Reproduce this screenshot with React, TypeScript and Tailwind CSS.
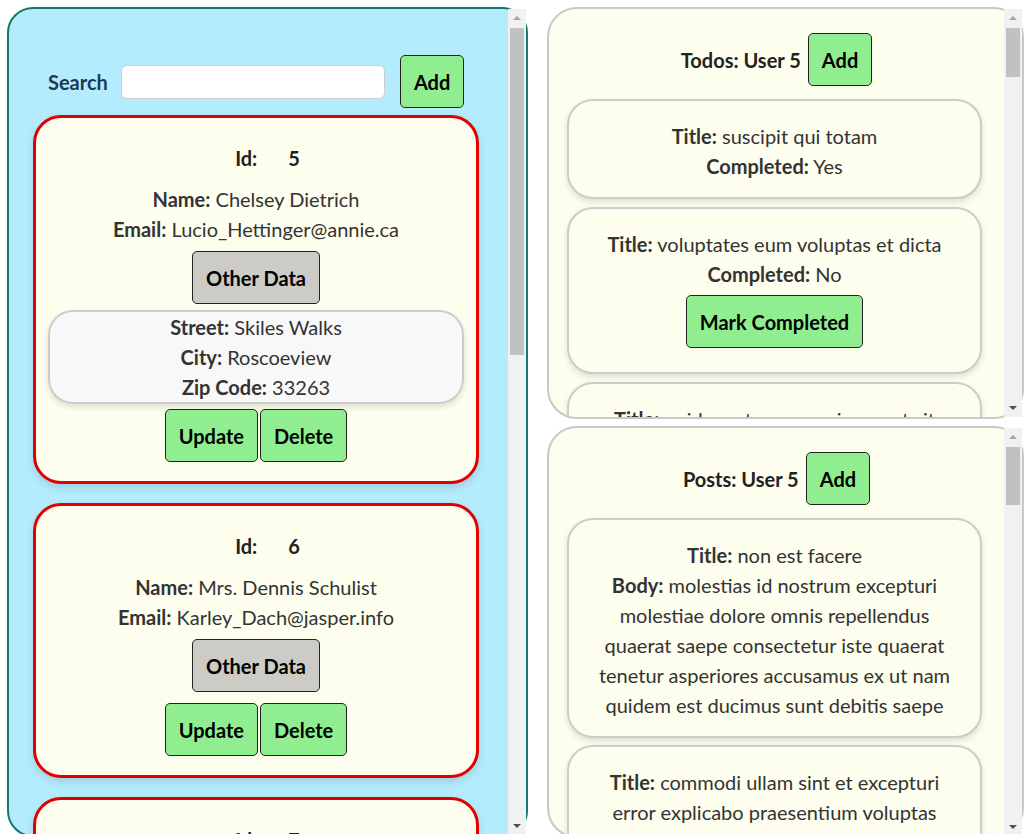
import type { ReactNode } from 'react';

type Address = { street: string; city: string; zipcode: string };
type User = { id: number; name: string; email: string; address?: Address; showAddress: boolean };

const USERS: User[] = [
  {
    id: 5,
    name: 'Chelsey Dietrich',
    email: 'Lucio_Hettinger@annie.ca',
    address: { street: 'Skiles Walks', city: 'Roscoeview', zipcode: '33263' },
    showAddress: true,
  },
  { id: 6, name: 'Mrs. Dennis Schulist', email: 'Karley_Dach@jasper.info', showAddress: false },
  { id: 7, name: 'Kurtis Weissnat', email: 'Telly.Hoeger@billy.biz', showAddress: false },
];

const TODOS = [
  { title: 'suscipit qui totam', completed: true },
  { title: 'voluptates eum voluptas et dicta', completed: false },
  { title: 'quidem at rerum quis ex aut sit', completed: false },
];

const POSTS = [
  {
    title: 'non est facere',
    body: 'molestias id nostrum excepturi molestiae dolore omnis repellendus quaerat saepe consectetur iste quaerat tenetur asperiores accusamus ex ut nam quidem est ducimus sunt debitis saepe',
  },
  {
    title: 'commodi ullam sint et excepturi error explicabo praesentium voluptas',
    body: 'odio fugit voluptatum ducimus earum autem est incidunt voluptatem odit reiciendis aliquam sunt sequi nulla dolorem',
  },
];

const FONT = "font-['Lato','Segoe_UI','Noto_Sans',sans-serif]";

function Btn({ children, gray }: { children: ReactNode; gray?: boolean }) {
  return (
    <button
      className={`h-[53px] px-[13px] rounded-[5px] border border-[#222] text-[20px] font-bold text-black ${
        gray ? 'bg-[#cdcbc5]' : 'bg-[#90ee90]'
      }`}
    >
      {children}
    </button>
  );
}

// classic windows-style scrollbar (the headless browser hides the real one)
function ScrollBar({ thumb }: { thumb: string }) {
  return (
    <div className="flex w-[18px] shrink-0 flex-col bg-[#f1f1f1]">
      <div className="flex h-[18px] items-center justify-center">
        <svg width="8" height="4" viewBox="0 0 8 4">
          <polygon points="0,4 4,0 8,4" fill="#a3a3a3" />
        </svg>
      </div>
      <div className={`mx-[2px] mt-[1px] bg-[#c1c1c1] ${thumb}`} />
      <div className="flex-1" />
      <div className="flex h-[18px] items-center justify-center">
        <svg width="8" height="4" viewBox="0 0 8 4">
          <polygon points="0,0 8,0 4,4" fill="#505050" />
        </svg>
      </div>
    </div>
  );
}

function Field({ label, value }: { label: string; value: string }) {
  return (
    <p className="leading-[30px]">
      <b className="font-bold">{label}:</b> {value}
    </p>
  );
}

function UserCard({ user }: { user: User }) {
  return (
    <div className="ml-[24px] mr-[29px] rounded-[28px] border-[3px] border-[#e00000] bg-[#fefeee] px-[12px] pt-[25px] pb-[19px] text-center shadow-[0_4px_8px_rgba(0,0,0,0.12)]">
      <p className="flex justify-center gap-[31px] pl-[23px] font-bold leading-[30px] text-[#222]">
        <span>Id:</span>
        <span>{user.id}</span>
      </p>
      <div className="mt-[11px]">
        <Field label="Name" value={user.name} />
        <Field label="Email" value={user.email} />
      </div>
      <div className="mt-[7px] flex justify-center">
        <Btn gray>Other Data</Btn>
      </div>
      {user.showAddress && user.address ? (
        <div className="mt-[6px] rounded-[25px] border-2 border-[#cccccc] bg-[#f8f8f8] shadow-[0_3px_6px_rgba(0,0,0,0.12)]">
          <Field label="Street" value={user.address.street} />
          <Field label="City" value={user.address.city} />
          <Field label="Zip Code" value={user.address.zipcode} />
        </div>
      ) : null}
      <div className={`flex justify-center gap-[2px] ${user.showAddress ? 'mt-[5px]' : 'mt-[11px]'}`}>
        <Btn>Update</Btn>
        <Btn>Delete</Btn>
      </div>
    </div>
  );
}

function SideCard({ children }: { children: ReactNode }) {
  return (
    <div className="ml-[18px] mr-[22px] rounded-[26px] border-2 border-[#cccccc] bg-[#fefeee] px-[23px] pt-[20px] pb-[16px] text-center shadow-[0_3px_6px_rgba(0,0,0,0.12)]">
      {children}
    </div>
  );
}

function SideHeader({ title }: { title: string }) {
  return (
    <div className="flex items-center justify-center gap-[7px] pt-[24px]">
      <span className="font-bold text-[#222]">{title}</span>
      <Btn>Add</Btn>
    </div>
  );
}

export default function App() {
  return (
    <div className={`${FONT} h-[834px] overflow-hidden bg-white text-[20px] text-[#333]`}>
      <div className="flex gap-[19px] pl-[7px] pt-[7px] pr-[12px]">
        {/* Users */}
        <div className="flex h-[830px] w-[521px] shrink-0 rounded-[26px] border-2 border-[#127a70] bg-[#b4ecfd]">
          <div className="min-w-0 flex-1 overflow-hidden rounded-l-[24px]">
            <div className="flex items-center pl-[39px] pt-[46px] pb-[7px]">
              <span className="font-bold text-[#1d3a55]">Search</span>
              <input className="ml-[13px] h-[34px] w-[264px] rounded-[6px] border border-[#cfcfcf] bg-white" />
              <div className="ml-[15px]">
                <Btn>Add</Btn>
              </div>
            </div>
            <div className="flex flex-col gap-[19px] pb-[20px]">
              {USERS.map(u => (
                <UserCard key={u.id} user={u} />
              ))}
            </div>
          </div>
          <ScrollBar thumb="h-[327px]" />
        </div>

        <div className="flex w-[477px] flex-col gap-[7px]">
          {/* Todos */}
          <div className="flex h-[412px] shrink-0 rounded-[30px] border-2 border-[#c8c8c8] bg-[#fefeee]">
            <div className="min-w-0 flex-1 overflow-hidden rounded-l-[28px]">
              <SideHeader title="Todos: User 5" />
              <div className="mt-[13px] flex flex-col gap-[8px] pb-[20px]">
                {TODOS.map((t, i) => (
                  <SideCard key={i}>
                    <Field label="Title" value={t.title} />
                    <Field label="Completed" value={t.completed ? 'Yes' : 'No'} />
                    {!t.completed && (
                      <div className="mt-[6px] mb-[8px] flex justify-center">
                        <Btn>Mark Completed</Btn>
                      </div>
                    )}
                  </SideCard>
                ))}
              </div>
            </div>
            <ScrollBar thumb="h-[49px]" />
          </div>

          {/* Posts */}
          <div className="flex h-[412px] shrink-0 rounded-[30px] border-2 border-[#c8c8c8] bg-[#fefeee]">
            <div className="min-w-0 flex-1 overflow-hidden rounded-l-[28px]">
              <SideHeader title="Posts: User 5" />
              <div className="mt-[13px] flex flex-col gap-[7px] pb-[20px]">
                {POSTS.map((p, i) => (
                  <SideCard key={i}>
                    <p className="leading-[30px]">
                      <b className="font-bold">Title:</b> {p.title}
                      <br />
                      <b className="font-bold">Body:</b> {p.body}
                    </p>
                  </SideCard>
                ))}
              </div>
            </div>
            <ScrollBar thumb="h-[58px]" />
          </div>
        </div>
      </div>
    </div>
  );
}
